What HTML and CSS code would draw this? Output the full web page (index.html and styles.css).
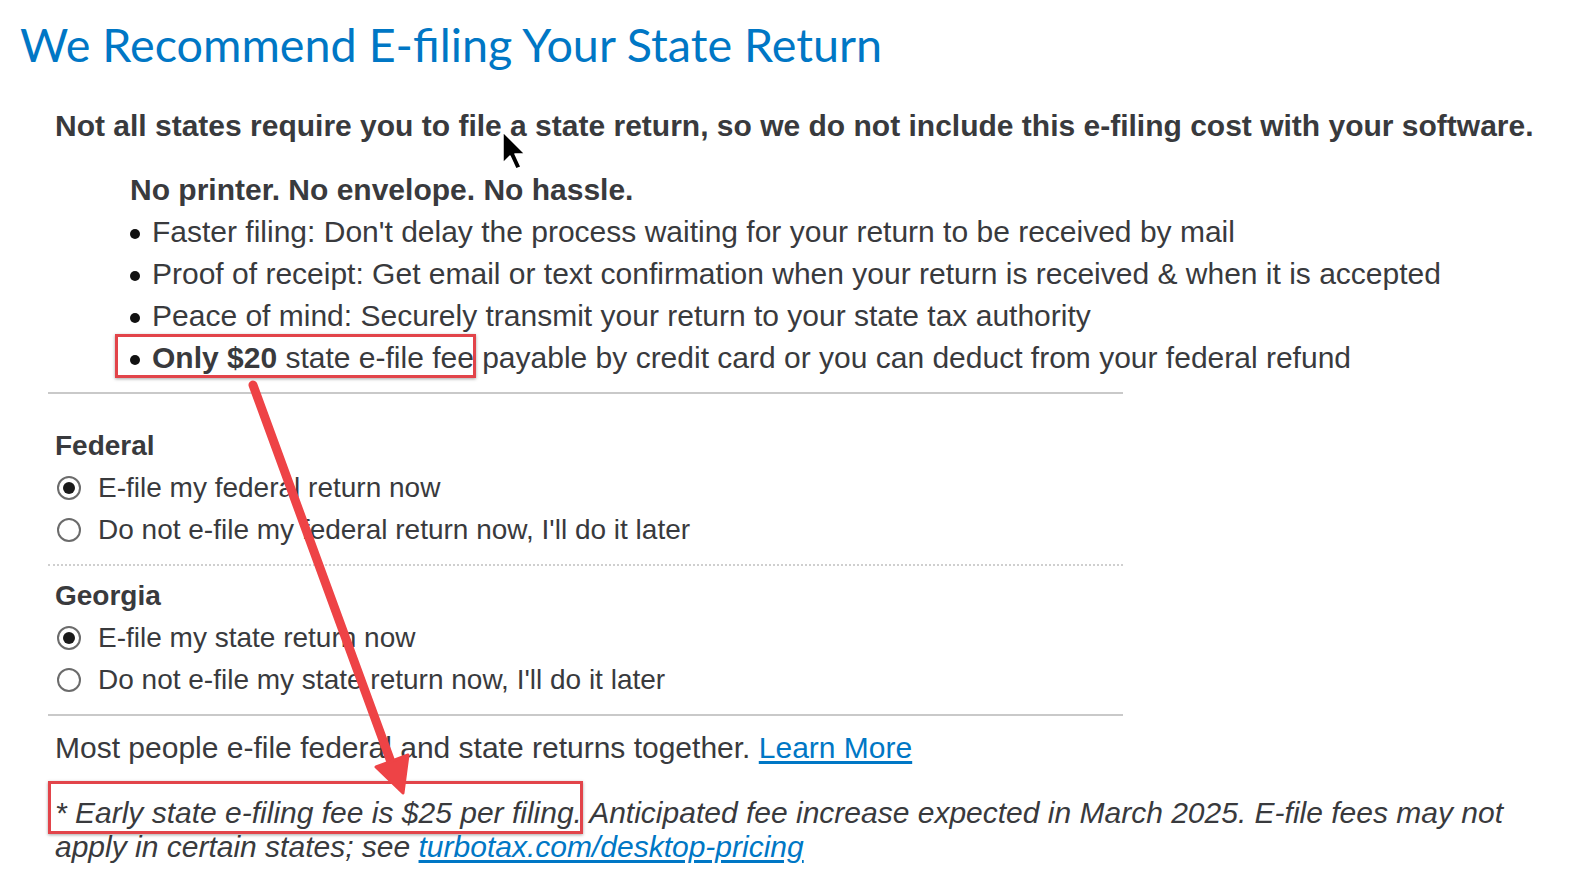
FILE: index.html
```html
<!DOCTYPE html>
<html lang="en">
<head>
<meta charset="utf-8">
<title>We Recommend E-filing Your State Return</title>
<link rel="stylesheet" href="styles.css">
</head>
<body>
<div class="page">
  <h1 class="title">We Recommend E-filing Your State Return</h1>
  <div class="content">
    <p class="intro">Not all states require you to file a state return, so we do not include this e-filing cost with your software.</p>
    <div class="benefits">
      <p class="benefits-head">No printer. No envelope. No hassle.</p>
      <ul class="bullets">
        <li>Faster filing: Don't delay the process waiting for your return to be received by mail</li>
        <li>Proof of receipt: Get email or text confirmation when your return is received &amp; when it is accepted</li>
        <li>Peace of mind: Securely transmit your return to your state tax authority</li>
        <li><b>Only $20</b> state e-file fee payable by credit card or you can deduct from your federal refund</li>
      </ul>
    </div>
    <div class="rule solid rule-top"></div>
    <div class="group group-federal">
      <p class="group-head">Federal</p>
      <label class="option"><span class="radio checked"></span>E-file my federal return now</label>
      <label class="option"><span class="radio"></span>Do not e-file my federal return now, I'll do it later</label>
    </div>
    <div class="rule dotted"></div>
    <div class="group group-state">
      <p class="group-head">Georgia</p>
      <label class="option"><span class="radio checked"></span>E-file my state return now</label>
      <label class="option"><span class="radio"></span>Do not e-file my state return now, I'll do it later</label>
    </div>
    <div class="rule solid"></div>
    <p class="most">Most people e-file federal and state returns together. <a class="link" href="#">Learn More</a></p>
    <p class="footnote">* Early state e-filing fee is $25 per filing. Anticipated fee increase expected in March 2025. E-file fees may not apply in certain states; see <a class="link" href="#">turbotax.com/desktop-pricing</a></p>
  </div>

  <div class="annot-box box-fee"></div>
  <div class="annot-box box-early"></div>
  <svg class="annot-svg" width="1576" height="874" viewBox="0 0 1576 874">
    <line x1="253" y1="385" x2="391" y2="762" stroke="#ee4346" stroke-width="9" stroke-linecap="round"/>
    <polygon points="403,793 376,767 408,755" fill="#ee4346" stroke="#ee4346" stroke-width="3" stroke-linejoin="round"/>
    <path d="M503 132 L503 163 L510 156 L516 169 L521 167 L515 154 L525 154 Z" fill="#000" stroke="#fff" stroke-width="1.5" stroke-linejoin="round"/>
  </svg>
</div>
</body>
</html>
```

FILE: styles.css
```css
* { box-sizing: border-box; }
html, body { margin: 0; padding: 0; background: #fff; }
body {
  font-family: "Liberation Sans", Arial, sans-serif;
  color: #393a3d;
  width: 1576px;
  height: 874px;
  overflow: hidden;
}
.page { position: relative; width: 1576px; height: 874px; }

.title {
  margin: 0;
  padding: 16px 0 0 20px;
  font-family: Lato, "Noto Sans", sans-serif;
  font-weight: 400;
  font-size: 46.7px;
  line-height: 56px;
  color: #0077c5;
}

.content { margin: 33px 0 0 48px; width: 1490px; }

p { margin: 0; }

.intro {
  padding-left: 7px;
  font-weight: 700;
  font-size: 30px;
  line-height: 42px;
}

.benefits { margin: 22px 0 0 82px; font-size: 30px; line-height: 42px; }
.benefits-head { font-weight: 700; }
.bullets { margin: 0; padding: 0; list-style: none; }
.bullets li { position: relative; padding-left: 22px; }
.bullets li::before {
  content: "";
  position: absolute;
  left: 0;
  top: 18px;
  width: 10px;
  height: 10px;
  border-radius: 50%;
  background: #111;
}
.bullets b { font-weight: 700; }

.rule { width: 1075px; }
.rule.solid { border-top: 2px solid #c9c9c9; margin-top: 13px; }
.rule-top { margin-top: 12px; }
.rule.dotted { border-top: 2px dotted #cfcfcf; margin-top: 13px; }

.group { padding-left: 7px; font-size: 28px; line-height: 42px; }
.group-federal { margin-top: 31px; }
.group-state { margin-top: 9px; }
.group-head { font-weight: 700; }
.option { display: flex; align-items: center; gap: 17px; padding-left: 2px; }
.radio {
  position: relative;
  flex: none;
  width: 24px;
  height: 24px;
  border: 2px solid #6b6b6b;
  border-radius: 50%;
  background: #fff;
}
.radio.checked::after {
  content: "";
  position: absolute;
  left: 4px;
  top: 4px;
  width: 12px;
  height: 12px;
  border-radius: 50%;
  background: #1a1a1a;
}

.most { margin-top: 11px; padding-left: 7px; font-size: 30px; line-height: 42px; }
.link { color: #0077c5; text-decoration: underline; text-underline-offset: 3px; }

.footnote {
  margin-top: 27px;
  padding-left: 7px;
  font-style: italic;
  font-size: 30px;
  line-height: 34px;
}

.annot-box {
  position: absolute;
  border: 3px solid #e2444a;
  box-shadow: 0 1px 3px rgba(0,0,0,0.35);
}
.box-fee { left: 115px; top: 334px; width: 361px; height: 44px; }
.box-early { left: 48px; top: 781px; width: 535px; height: 53px; }

.annot-svg { position: absolute; left: 0; top: 0; pointer-events: none; }
```
